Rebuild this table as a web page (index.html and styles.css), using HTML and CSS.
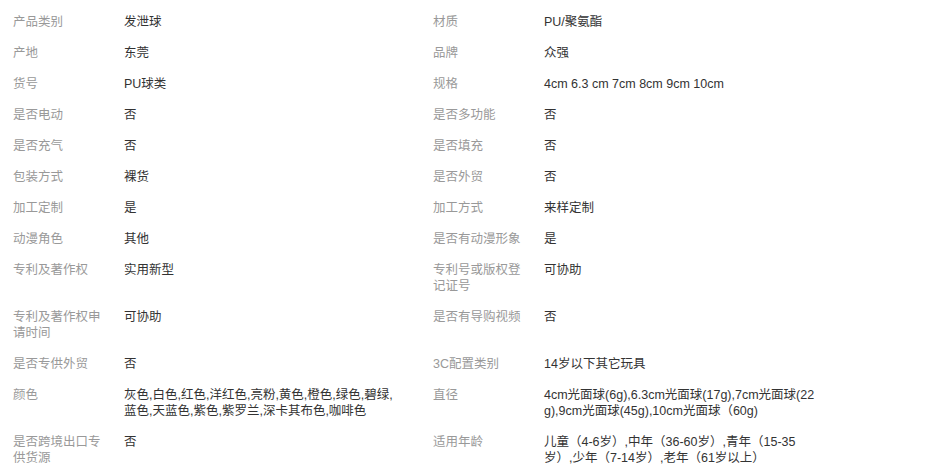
FILE: index.html
```html
<!DOCTYPE html>
<html lang="zh-CN">
<head>
  <meta charset="UTF-8" />
  <meta name="viewport" content="width=device-width, initial-scale=1.0"/>
  <title>商品属性</title>
  <link rel="stylesheet" href="styles.css">
</head>
<body>

  <!-- 商品属性表 -->
  <div class="attr-table">
    <div class="attr-name">产品类别</div><div class="attr-value">发泄球</div>
    <div class="attr-name">材质</div><div class="attr-value">PU/聚氨酯</div>

    <div class="attr-name">产地</div><div class="attr-value">东莞</div>
    <div class="attr-name">品牌</div><div class="attr-value">众强</div>

    <div class="attr-name">货号</div><div class="attr-value">PU球类</div>
    <div class="attr-name">规格</div><div class="attr-value">4cm 6.3 cm 7cm 8cm 9cm 10cm</div>

    <div class="attr-name">是否电动</div><div class="attr-value">否</div>
    <div class="attr-name">是否多功能</div><div class="attr-value">否</div>

    <div class="attr-name">是否充气</div><div class="attr-value">否</div>
    <div class="attr-name">是否填充</div><div class="attr-value">否</div>

    <div class="attr-name">包装方式</div><div class="attr-value">裸货</div>
    <div class="attr-name">是否外贸</div><div class="attr-value">否</div>

    <div class="attr-name">加工定制</div><div class="attr-value">是</div>
    <div class="attr-name">加工方式</div><div class="attr-value">来样定制</div>

    <div class="attr-name">动漫角色</div><div class="attr-value">其他</div>
    <div class="attr-name">是否有动漫形象</div><div class="attr-value">是</div>

    <div class="attr-name">专利及著作权</div><div class="attr-value">实用新型</div>
    <div class="attr-name">专利号或版权登记证号</div><div class="attr-value">可协助</div>

    <div class="attr-name">专利及著作权申请时间</div><div class="attr-value">可协助</div>
    <div class="attr-name">是否有导购视频</div><div class="attr-value">否</div>

    <div class="attr-name">是否专供外贸</div><div class="attr-value">否</div>
    <div class="attr-name">3C配置类别</div><div class="attr-value">14岁以下其它玩具</div>

    <div class="attr-name">颜色</div><div class="attr-value">灰色,白色,红色,洋红色,亮粉,黄色,橙色,绿色,碧绿,蓝色,天蓝色,紫色,紫罗兰,深卡其布色,咖啡色</div>
    <div class="attr-name">直径</div><div class="attr-value">4cm光面球(6g),6.3cm光面球(17g),7cm光面球(22g),9cm光面球(45g),10cm光面球（60g)</div>

    <div class="attr-name">是否跨境出口专供货源</div><div class="attr-value">否</div>
    <div class="attr-name">适用年龄</div><div class="attr-value">儿童（4-6岁）,中年（36-60岁）,青年（15-35岁）,少年（7-14岁）,老年（61岁以上）</div>
  </div>

</body>
</html>
```

FILE: styles.css
```css
body {
  margin: 0;
  padding: 0;
  background: #fff;
  font-family: "Liberation Sans", "Noto Sans CJK SC", sans-serif;
  font-size: 12.5px;
  line-height: 16px;
}
.attr-table {
  display: grid;
  grid-template-columns: 111px 309px 111px 309px;
  padding: 7px 0 0 13px;
}
.attr-name {
  padding: 7px 16px 8px 0;
  color: #999;
}
.attr-value {
  padding: 7px 31px 8px 0;
  color: #333;
  word-break: break-all;
}
```
